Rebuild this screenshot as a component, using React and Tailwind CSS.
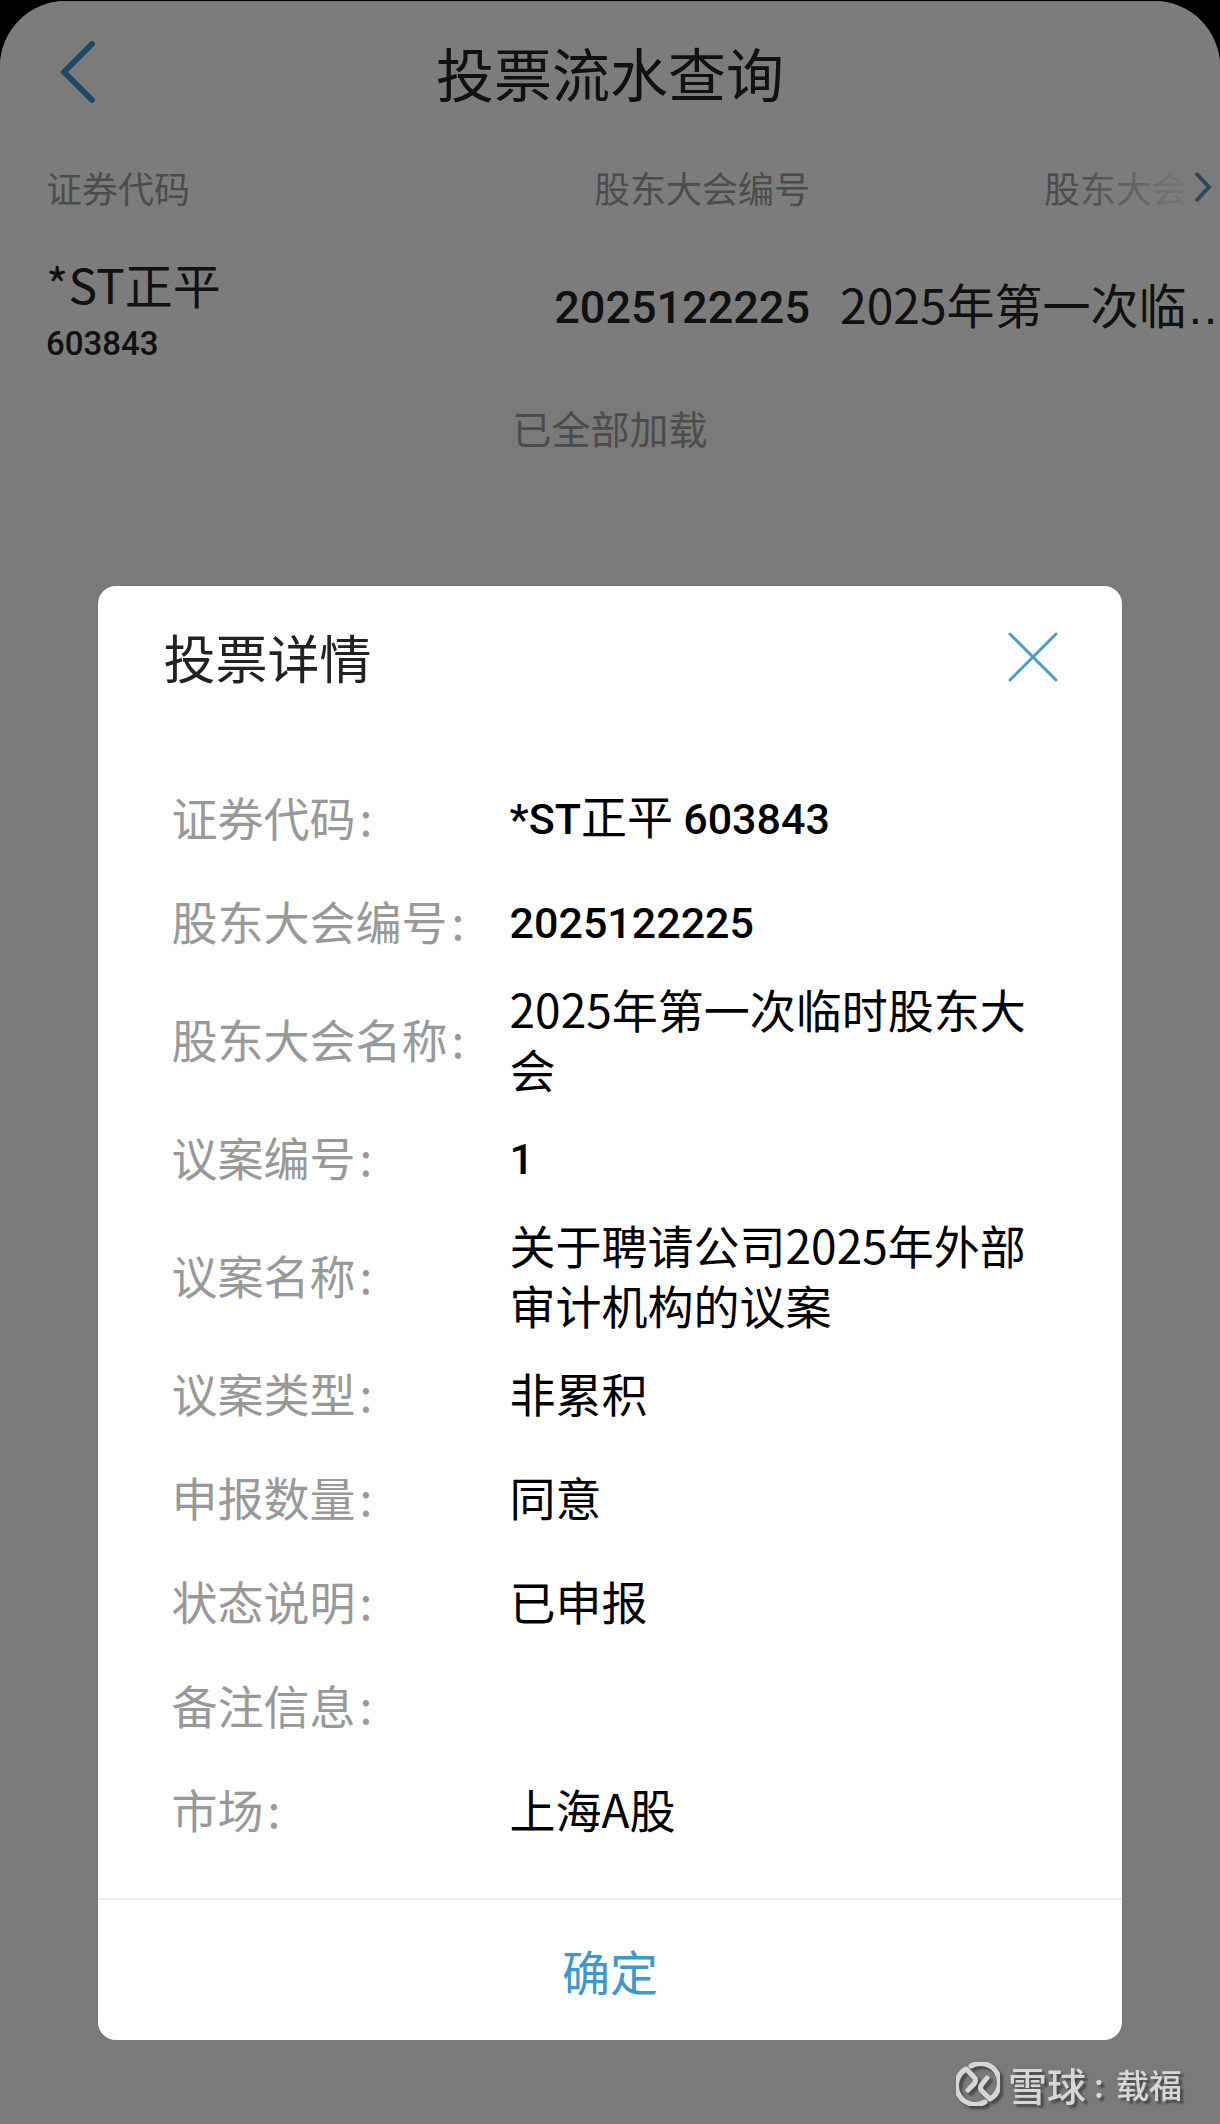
import React, { useState } from 'react';

const Num = ({ children }) => (
    <span className="font-['Roboto',sans-serif] text-[43px] font-medium">{children}</span>
);

const details = [
    { label: '证券代码', value: <><Num>*ST</Num>正平 <Num>603843</Num></> },
    { label: '股东大会编号', value: <Num>2025122225</Num> },
    { label: '股东大会名称', value: '2025年第一次临时股东大会' },
    { label: '议案编号', value: <Num>1</Num> },
    { label: '议案名称', value: '关于聘请公司2025年外部审计机构的议案' },
    { label: '议案类型', value: '非累积' },
    { label: '申报数量', value: '同意' },
    { label: '状态说明', value: '已申报' },
    { label: '备注信息', value: '' },
    { label: '市场', value: '上海A股' },
];

const TopBar = () => (
    <header className="grid grid-cols-[1fr_auto_1fr] items-center h-[142px] px-14">
        <button type="button" aria-label="返回" className="justify-self-start">
            <svg width="44" height="68" viewBox="0 0 44 68" fill="none" stroke="#3a93cc" strokeWidth="6" strokeLinecap="round" strokeLinejoin="round">
                <path d="M36 6 L8 34 L36 62" />
            </svg>
        </button>
        <h1 className="text-[58px] leading-none text-[#222]">投票流水查询</h1>
    </header>
);

const RecordTable = () => (
    <div className="relative overflow-hidden border-b-2 border-[#fafafa]">
        <table className="w-[calc(100%+40px)] table-fixed">
            <thead>
                <tr className="h-[88px] text-4xl text-[#999]">
                    <th className="pl-[46px] text-left font-normal">证券代码</th>
                    <th className="text-right font-normal">股东大会编号</th>
                    <th className="w-[450px] text-right font-normal">股东大会名称</th>
                </tr>
            </thead>
            <tbody>
                <tr className="h-[148px] text-[#222]">
                    <td className="pl-[46px] pt-3">
                        <div className="text-5xl leading-[60px]">*ST正平</div>
                        <div className="text-4xl leading-[52px]">
                            <span className="font-['Roboto',sans-serif] text-[33px] font-medium">603843</span>
                        </div>
                    </td>
                    <td className="text-right text-5xl leading-[60px]">
                        <span className="font-['Roboto',sans-serif] text-[45px] font-medium">2025122225</span>
                    </td>
                    <td className="pl-[30px]">
                        <div className="truncate font-['Liberation_Sans','Noto_Sans_CJK_SC',sans-serif] text-5xl leading-[60px]">
                            <span className="font-['Noto_Sans_CJK_SC',sans-serif]">2025年第一次临时股东大会</span>
                        </div>
                    </td>
                </tr>
            </tbody>
        </table>
        <div className="absolute right-0 top-0 flex h-[88px] w-[150px] items-center justify-end bg-linear-to-r from-[#f9f9f9]/0 to-[#f9f9f9] to-90% pr-2">
            <svg width="18" height="32" viewBox="0 0 18 32" fill="none" stroke="#5f93b4" strokeWidth="4">
                <path d="M2 2 L15 16 L2 30" />
            </svg>
        </div>
    </div>
);

const DetailDialog = ({ onClose }) => (
    <section role="dialog" aria-labelledby="dialog-title" className="mx-auto w-[84%] rounded-[18px] bg-white">
        <div className="flex h-[142px] items-center justify-between pl-[66px] pr-16">
            <h2 id="dialog-title" className="text-[52px] leading-none text-[#222]">投票详情</h2>
            <button type="button" aria-label="关闭" onClick={onClose}>
                <svg width="50" height="50" viewBox="0 0 50 50" fill="none" stroke="#4a9cc9" strokeWidth="3" strokeLinecap="round">
                    <path d="M2 2 L48 48 M48 2 L2 48" />
                </svg>
            </button>
        </div>
        <dl className="px-[74px] pt-9 pb-[38px]">
            {details.map((item) => (
                <div key={item.label} className="flex min-h-[104px] items-center py-1.5 text-[46px] leading-[60px]">
                    <dt className="w-[338px] shrink-0 text-[#999]">
                        {item.label}<span className="ml-1">:</span>
                    </dt>
                    <dd className="text-black">{item.value}</dd>
                </div>
            ))}
        </dl>
        <button type="button" onClick={onClose} className="block h-[142px] w-full border-t-2 border-[#ececec] text-5xl text-[#3d98cb]">
            确定
        </button>
    </section>
);

const Watermark = () => (
    <div className="absolute bottom-4 right-[38px] flex items-center text-[#d6d6d6] drop-shadow-[3px_3px_1px_rgba(0,0,0,0.4)]">
        <svg width="44" height="44" viewBox="0 0 44 44" fill="none" stroke="currentColor" strokeWidth="5" strokeLinecap="round" strokeLinejoin="round">
            <path d="M15 4 A19 19 0 0 1 34 37 L26 29 Q23 26 26 22 L31 16" />
            <path d="M29 40 A19 19 0 0 1 10 7 L18 15 Q21 18 18 22 L12 28" />
        </svg>
        <span className="ml-2 text-[39px] leading-[48px] font-medium">雪球</span>
        <span className="ml-2 w-[22px] text-[33px] leading-[48px] font-medium">:</span>
        <span className="text-[33px] leading-[48px] font-medium">载福</span>
    </div>
);

const App = () => {
    const [open, setOpen] = useState(true);

    return (
        <div className="relative min-h-screen bg-black pt-px font-['Noto_Sans_CJK_SC',sans-serif]" lang="zh-CN">
            <main className="min-h-[calc(100vh-1px)] rounded-t-[66px] bg-[#f5f5f5]">
                <div className="rounded-t-[66px] bg-[#f9f9f9]">
                    <TopBar />
                    <RecordTable />
                </div>
                <p className="py-5 text-center text-[39px] leading-[52px] text-[#999]">已全部加载</p>
            </main>
            {open && (
                <div className="absolute inset-0 bg-black/50 pt-[586px]">
                    <DetailDialog onClose={() => setOpen(false)} />
                </div>
            )}
            <Watermark />
        </div>
    );
};

export default App;
